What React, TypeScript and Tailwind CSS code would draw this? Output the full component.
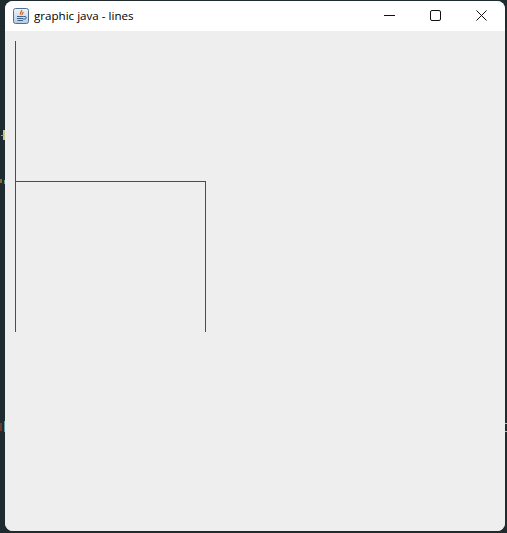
export default function App() {
  return (
    <div className="relative h-[533px] w-[507px] overflow-hidden bg-[#1e2b2f] pt-px pl-[5px] pr-[2px] pb-[2px]" style={{ fontFamily: '"Open Sans", "Noto Sans", sans-serif' }}>
      <span className="absolute left-[3px] top-[130px] h-[10px] w-[2px] bg-[#c9c98f]" />
      <span className="absolute left-[1px] top-[135px] h-px w-[3px] bg-[#7fa8a8]" />
      <span className="absolute left-0 top-[179px] h-[4px] w-[2px] bg-[#8a6a2f]" />
      <span className="absolute left-[4px] top-[180px] h-[4px] w-px bg-[#5f9ea0]" />
      <span className="absolute left-0 top-[423px] h-[8px] w-[2px] bg-[#6b3a2a]" />
      <span className="absolute left-[4px] top-[421px] h-[11px] w-px bg-[#5f9ea0]" />
      <span className="absolute left-[505px] top-[423px] h-px w-[2px] bg-[#c9b98f]" />
      <span className="absolute left-[505px] top-[431px] h-px w-[2px] bg-[#c9b98f]" />
      <div className="flex h-full w-full flex-col overflow-hidden rounded-[8px] bg-[#eeeeee]">
        <div className="flex h-[30px] shrink-0 items-center bg-white">
          <svg width="16" height="16" viewBox="0 0 16 16" className="ml-[8px] shrink-0">
            <defs>
              <linearGradient id="ig" x1="0" y1="0" x2="0" y2="1">
                <stop offset="0" stopColor="#f0f4f8" />
                <stop offset="1" stopColor="#b9cbdd" />
              </linearGradient>
            </defs>
            <rect x="0.5" y="0.5" width="15" height="15" rx="2" fill="url(#ig)" stroke="#4f7196" />
            <path d="M8.500 2c1 1.500-2 2.500-1 4.500M10 4c.5 1-1.500 1.500-.8 3" fill="none" stroke="#d9621c" strokeWidth="1.300" />
            <path d="M4 8.500h6.500M4 10.500h6M4.500 12.500h5.500" stroke="#3a648c" strokeWidth="1" />
            <path d="M10.500 8.500h1.500a1 1 0 0 1 0 2.500H10" fill="none" stroke="#3a648c" />
          </svg>
          <span className="ml-[5px] text-[11.600px] leading-none text-black">graphic java - lines</span>
          <div className="ml-auto flex items-center">
            <svg width="46" height="30" viewBox="0 0 46 30"><path d="M17 14.500h11" stroke="#111" /></svg>
            <svg width="46" height="30" viewBox="0 0 46 30"><rect x="17.500" y="9.500" width="10" height="10" rx="1.500" fill="none" stroke="#111" /></svg>
            <svg width="46" height="30" viewBox="0 0 46 30"><path d="M17.500 9.500l10 10M27.500 9.500l-10 10" stroke="#111" /></svg>
          </div>
        </div>
        <div className="min-h-0 flex-1 bg-[#eeeeee]">
          <svg width="500" height="500" viewBox="0 0 500 500" className="block">
            <path d="M10.500 10v291M10.500 150.500h190.500M200.500 150.500v150.500" fill="none" stroke="#ff0000" strokeWidth="1" />
          </svg>
        </div>
      </div>
    </div>
  );
}
